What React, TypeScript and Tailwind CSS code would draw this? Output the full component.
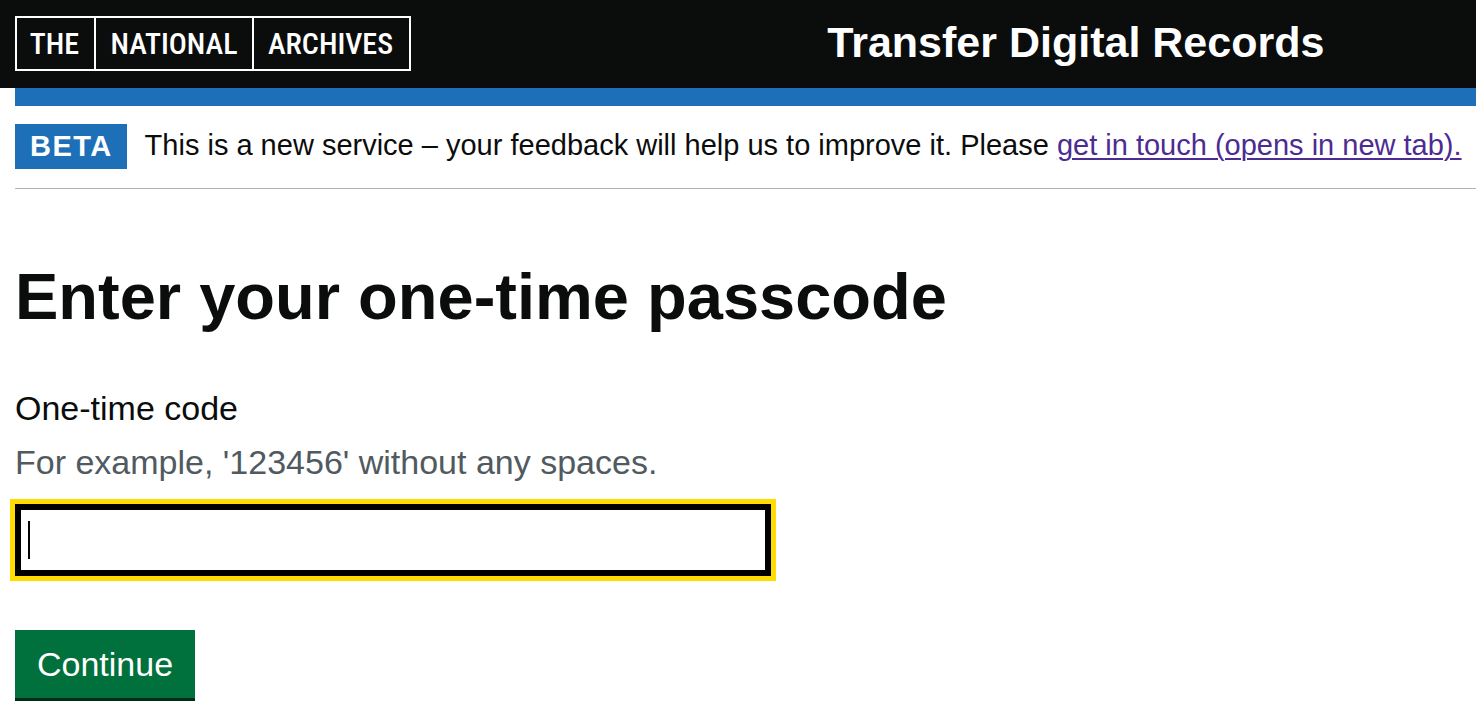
import React from "react";

function Logo() {
  return (
    <a
      href="#home"
      aria-label="The National Archives"
      className="inline-flex h-[55px] shrink-0 items-stretch divide-x-2 divide-white border-2 border-white font-['Roboto_Condensed','Liberation_Sans_Narrow',sans-serif] text-[30px] leading-[51px] font-medium text-white"
    >
      <span className="w-[79px] pr-[2px] text-center">THE</span>
      <span className="w-[158px] text-center">NATIONAL</span>
      <span className="w-[155px] pr-[2px] text-center">ARCHIVES</span>
    </a>
  );
}

function Header() {
  return (
    <header className="bg-[#0b0c0c]">
      <div className="flex h-[88px] items-start pt-4 pl-[15px]">
        <div className="w-[55.6%] shrink-0">
          <Logo />
        </div>
        <a href="#service" className="pt-[1px] text-[43px] leading-[50px] font-bold whitespace-nowrap text-white">
          Transfer Digital Records
        </a>
      </div>
    </header>
  );
}

function PhaseBanner() {
  return (
    <div className="ml-[15px] border-t-[18px] border-b border-t-[#1d70b8] border-b-[#b1b4b6] pt-[18px] pb-[19px]">
      <p className="flex items-center">
        <strong className="mr-[18px] bg-[#1d70b8] pr-[14px] pl-[15px] text-[29px] leading-[45px] font-bold tracking-wider text-white uppercase">
          Beta
        </strong>
        <span className="pb-[2px] text-[29px] leading-[43px] whitespace-nowrap">
          This is a new service – your feedback will help us to improve it. Please{" "}
          <a href="#contact" className="text-[#4c2c92] underline decoration-2 underline-offset-[3px]">
            get in touch (opens in new tab).
          </a>
        </span>
      </p>
    </div>
  );
}

export default function App() {
  return (
    <div className="overflow-x-hidden bg-white font-['Liberation_Sans',Arial,sans-serif] text-[#0b0c0c]">
      <Header />
      <PhaseBanner />
      <main className="px-[15px] pt-[72px]">
        <h1 className="text-[65px] leading-[72px] font-bold">Enter your one-time passcode</h1>
        <form className="pt-[53px]" onSubmit={(event) => event.preventDefault()}>
          <label htmlFor="code" className="block text-[34px] leading-[45px]">
            One-time code
          </label>
          <p id="code-hint" className="pt-[9px] text-[34px] leading-[45px] text-[#505a5f]">
            For example, '123456' without any spaces.
          </p>
          <div className="relative mt-[19px] w-[756px] max-w-full">
            <input
              id="code"
              type="text"
              autoFocus
              autoComplete="one-time-code"
              aria-describedby="code-hint"
              className="block h-[72px] w-full border-[6px] border-black px-[7px] text-[34px] caret-transparent outline-[5px] outline-[#ffdd00]"
            />
            <span aria-hidden="true" className="absolute top-[17px] left-[13px] h-[38px] w-[2px] bg-black" />
          </div>
          <button
            type="submit"
            className="mt-[54px] mb-[26px] block bg-[#00703c] px-[22px] pt-[1px] text-[34px] leading-[67px] text-white shadow-[0_3px_0_#002d18]"
          >
            Continue
          </button>
        </form>
      </main>
    </div>
  );
}
